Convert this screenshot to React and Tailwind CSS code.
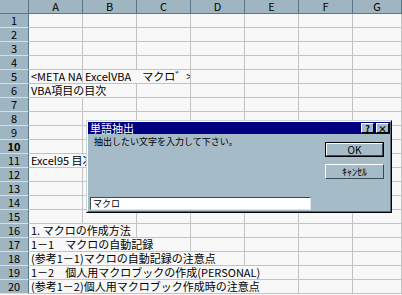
import React from 'react';

// --- SHEET DATA ---
const COLS = ['A', 'B', 'C', 'D', 'E', 'F', 'G'];
const COL_W = 54;

// text cells: row -> { span, text, clip }
const CELLS = {
  5: [
    { span: 1, text: '<META NAME=', clip: true },
    { span: 2, text: 'ExcelVBA\u3000マクロ゛>' },
  ],
  6: [{ span: 2, text: 'VBA項目の目次' }],
  11: [{ span: 2, text: 'Excel95 目次' }],
  16: [{ span: 2, text: '1. マクロの作成方法' }],
  17: [{ span: 3, text: '1－1\u3000マクロの自動記録' }],
  18: [{ span: 4, text: '(参考1－1)マクロの自動記録の注意点' }],
  19: [{ span: 5, text: '1－2\u3000個人用マクロブックの作成(PERSONAL)' }],
  20: [{ span: 5, text: '(参考1－2)個人用マクロブック作成時の注意点' }],
};

const FONT = "font-['Noto_Sans_CJK_JP','Liberation_Sans',sans-serif]";

const Row = ({ n }) => {
  const segs = CELLS[n] || [];
  const cells = [];
  let used = 0;
  segs.forEach((s, i) => {
    cells.push(
      <div
        key={'t' + i}
        style={{ width: s.span * COL_W }}
        className="h-[14px] shrink-0 border-r border-b border-[#c3c3c3] bg-[#f8f8f8] overflow-hidden whitespace-nowrap pl-[2px] text-[11px] leading-[13px] text-black"
      >
        {s.text}
      </div>
    );
    used += s.span;
  });
  for (let c = used; c < COLS.length; c++) {
    cells.push(
      <div
        key={'e' + c}
        className={`h-[14px] border-r border-b border-[#c3c3c3] bg-[#f8f8f8] ${c === COLS.length - 1 ? 'flex-1' : 'w-[54px] shrink-0'}`}
      />
    );
  }
  return (
    <div className="flex h-[14px]">
      <div
        className={`w-[29px] h-[14px] shrink-0 bg-[#9fb6c2] border-r border-r-[#56788a] border-b border-b-[#d4e0e6] text-center text-[11px] leading-[13px] text-black ${n === 10 ? 'font-bold' : ''}`}
      >
        {n}
      </div>
      {cells}
    </div>
  );
};

const TitleBtn = ({ children }) => (
  <div className="w-[13px] h-[10px] bg-[#a5bbc7] border border-t-white border-l-white border-r-black border-b-black flex items-center justify-center text-[9px] leading-none font-bold text-black">
    {children}
  </div>
);

const Button = ({ children, isDefault }) => (
  <div className={`w-[59px] h-[15px] ${isDefault ? 'border border-black' : ''}`}>
    <div className="w-full h-full bg-[#a5bbc7] border border-t-white border-l-white border-r-[#3a4a52] border-b-[#3a4a52] flex items-center justify-center text-[10px] leading-none text-black">
      {children}
    </div>
  </div>
);

const Dialog = () => (
  <div className="absolute left-[86px] top-[120px] w-[306px] h-[93px] border border-t-[#c8d6de] border-l-[#c8d6de] border-r-black border-b-black">
    <div className="w-full h-full flex flex-col bg-[#a5bbc7] border border-t-white border-l-white border-r-[#5b6d77] border-b-[#5b6d77]">
      {/* title bar */}
      <div className="h-[12px] bg-[#000080] flex items-center pl-[2px] pr-[1px]">
        <span className="text-white text-[11px] leading-none">単語抽出</span>
        <div className="ml-auto flex gap-[2px]">
          <TitleBtn>?</TitleBtn>
          <TitleBtn>×</TitleBtn>
        </div>
      </div>
      {/* body */}
      <div className="flex-1 flex">
        <div className="flex-1 flex flex-col pl-[2px] pt-[2px] pb-[1px]">
          <div className="pl-[4px] text-[9px] leading-[12px] text-black">抽出したい文字を入力して下さい。</div>
          <div className="mt-auto w-[221px] h-[13px] bg-white border border-t-[#3a4a52] border-l-[#3a4a52] border-r-[#dfe8ee] border-b-[#dfe8ee] pl-[2px] text-[9px] leading-[11px] text-black">
            マクロ
          </div>
        </div>
        <div className="w-[59px] mr-[6px] pt-[8px] flex flex-col gap-[7px]">
          <Button isDefault>OK</Button>
          <Button>ｷｬﾝｾﾙ</Button>
        </div>
      </div>
    </div>
  </div>
);

export default function App() {
  return (
    <div className={`relative w-[402px] h-[295px] overflow-hidden bg-[#f8f8f8] ${FONT}`}>
      {/* column headers */}
      <div className="flex h-[14px]">
        <div className="w-[29px] h-[14px] shrink-0 bg-[#9fb6c2] border-r border-b border-[#56788a]" />
        {COLS.map((c, i) => (
          <div
            key={c}
            className={`h-[14px] bg-[#9fb6c2] border-r border-b border-[#56788a] text-center text-[11px] leading-[13px] text-black ${i === COLS.length - 1 ? 'flex-1' : 'w-[54px] shrink-0'}`}
          >
            {c}
          </div>
        ))}
      </div>
      {Array.from({ length: 20 }, (_, i) => (
        <Row key={i} n={i + 1} />
      ))}
      <Dialog />
    </div>
  );
}
